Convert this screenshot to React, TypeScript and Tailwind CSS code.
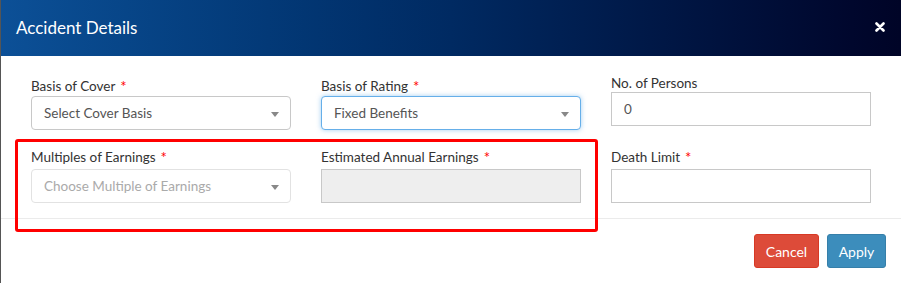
import React from 'react';

const font = { fontFamily: '"Lato", "Liberation Sans", sans-serif' };

const Star = () => <sup className="ml-[5px] text-[15px] text-[#ff0000] relative top-[1px]">*</sup>;

const Caret = () => (
  <svg className="absolute right-[11px] top-[15px]" width="8" height="5" viewBox="0 0 8 5">
    <path d="M0 0h8L4 5z" fill="#888" />
  </svg>
);

interface SelectProps {
  text: string;
  focused?: boolean;
  disabled?: boolean;
}

const FakeSelect: React.FC<SelectProps> = ({ text, focused, disabled }) => {
  let box = 'border-[#c8c8c8]';
  if (focused) box = 'border-[#66afe9] shadow-[0_0_5px_rgba(102,175,233,0.6)]';
  if (disabled) box = 'border-[#e2e2e2]';
  return (
    <div className={`relative h-[34px] rounded-[4px] border bg-white pl-[12px] text-[13.5px] leading-[32px] ${box} ${disabled ? 'text-[#aaa]' : 'text-[#555]'}`}>
      {text}
      <Caret />
    </div>
  );
};

const FakeInput: React.FC<{ value?: string; disabled?: boolean }> = ({ value, disabled }) => (
  <div className={`h-[34px] border border-[#c8c8c8] pl-[12px] text-[13.5px] leading-[32px] text-[#555] ${disabled ? 'bg-[#eeeeee]' : 'bg-white'}`}>
    {value}
  </div>
);

export default function App() {
  return (
    <div className="relative w-[901px] h-[283px] bg-white border-l border-[#555] overflow-hidden" style={font}>
      <div className="h-[56px] flex items-center justify-between pl-[15px] pr-[16px] bg-gradient-to-r from-[#0c5097] via-[#002a62] to-[#000427]">
        <h4 className="text-[17px] text-white">Accident Details</h4>
        <button aria-label="Close" className="mt-[-3px]">
          <svg width="10" height="10" viewBox="0 0 10 10">
            <path d="M1.5 1.5l7 7M8.5 1.5l-7 7" stroke="#fff" strokeWidth="2.6" strokeLinecap="round" />
          </svg>
        </button>
      </div>

      <div className="pl-[30px] pr-[29px] pt-[16px] pb-[15px] grid grid-cols-[260px_260px_260px] gap-x-[30px] gap-y-[15px] text-[#333] text-[13.5px]">
        <div>
          <div className="h-[24px] pt-[4px] leading-[20px]">Basis of Cover<Star /></div>
          <FakeSelect text="Select Cover Basis" />
        </div>
        <div>
          <div className="h-[24px] pt-[4px] leading-[20px]">Basis of Rating<Star /></div>
          <FakeSelect text="Fixed Benefits" focused />
        </div>
        <div>
          <div className="h-[20px] pt-[1px] leading-[20px]">No. of Persons</div>
          <FakeInput value="0" />
        </div>

        <div>
          <div className="h-[24px] pt-[2px] leading-[20px]">Multiples of Earnings<Star /></div>
          <FakeSelect text="Choose Multiple of Earnings" disabled />
        </div>
        <div>
          <div className="h-[24px] pt-[2px] leading-[20px]">Estimated Annual Earnings<Star /></div>
          <FakeInput disabled />
        </div>
        <div>
          <div className="h-[24px] pt-[2px] leading-[20px]">Death Limit<Star /></div>
          <FakeInput />
        </div>
      </div>

      <div className="border-t border-[#ebebeb] pt-[15px] pr-[15px] flex justify-end gap-[8px]">
        <button className="w-[65px] h-[34px] rounded-[3px] bg-[#dd4b39] border border-[#d73925] text-white text-[14px]">Cancel</button>
        <button className="w-[59px] h-[34px] rounded-[3px] bg-[#3c8dbc] border border-[#367fa9] text-white text-[14px]">Apply</button>
      </div>

      {/* red annotation box drawn over the second row */}
      <div className="absolute left-[14px] top-[139px] w-[583px] h-[93px] border-[3px] border-[#ff0000] rounded-[3px] pointer-events-none" />
    </div>
  );
}
